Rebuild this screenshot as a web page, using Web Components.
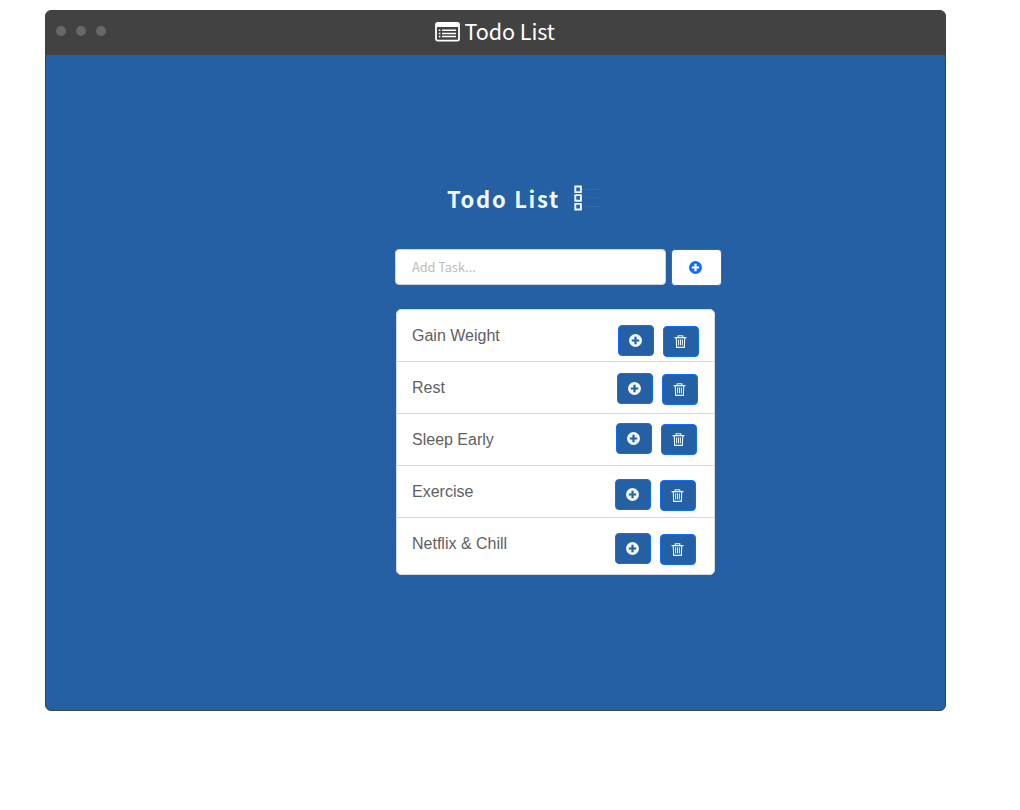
<!DOCTYPE html>
<html lang="en">
<head>
<meta charset="utf-8">
<title>Todo List</title>
<style>
body{margin:0;background:#fff;font-family:"Noto Sans CJK SC","Noto Sans",sans-serif}
</style>
</head>
<body>
<app-window caption="Todo List">
  <list-heading>Todo List</list-heading>
  <task-form></task-form>
  <task-list>
    <task-row style="--top:15px;--right:15px">Gain Weight</task-row>
    <task-row style="--top:11px;--right:16px">Rest</task-row>
    <task-row style="--top:9px;--right:17px">Sleep Early</task-row>
    <task-row style="--top:13px;--right:18px">Exercise</task-row>
    <task-row style="--top:15px;--right:18px;--height:56px;--line:0">Netflix &amp; Chill</task-row>
  </task-list>
</app-window>
<script>
const define = (name, html) => customElements.define(name, class extends HTMLElement {
  constructor() {
    super();
    this.attachShadow({mode: 'open'}).innerHTML = html;
  }
  connectedCallback() {
    const c = this.shadowRoot.querySelector('[data-caption]');
    if (c) c.textContent = this.getAttribute('caption');
  }
});

define('plus-icon', `<style>:host{display:block;width:13px;height:13px}svg{display:block;width:100%;height:100%}</style>
<svg viewBox="0 0 13 13"><path fill="currentColor" fill-rule="evenodd" d="M6.5 0a6.5 6.5 0 1 1 0 13a6.5 6.5 0 1 1 0-13zM5.4 2.8v2.6H2.8v2.2h2.6v2.6h2.2V7.6h2.6V5.4H7.6V2.8z"/></svg>`);

define('trash-icon', `<style>:host{display:block;width:13px;height:13px}svg{display:block}</style>
<svg width="13" height="13" viewBox="0 0 13 13" fill="none" stroke="currentColor" stroke-width="1.1"><path d="M.5 2.6h12M4.2 2.4V.7h4.6v1.7M2.3 2.8l.3 9.6h7.8l.3-9.6"/><path d="M4.6 4.4v6M6.5 4.4v6M8.4 4.4v6" stroke-width="1"/></svg>`);

define('icon-button', `<style>
:host{display:block;width:36px;height:31px}
button{box-sizing:border-box;width:100%;height:100%;margin:0;padding:0 var(--nudge,1px) 0 0;display:flex;align-items:center;justify-content:center;border:1px solid #0d6efd;border-radius:4px;background:var(--fill,#2560a4);color:var(--ink,#f0f8f8)}
</style><button><slot></slot></button>`);

define('app-window', `<style>
:host{display:flex;flex-direction:column;box-sizing:border-box;width:901px;height:701px;margin:10px 0 0 45px;border:1px solid #424242;border-radius:6px;background:#2560a4;overflow:hidden}
header{display:grid;grid-template-columns:1fr auto 1fr;height:44px;flex:none;background:#424242;color:#fff}
.dots{display:flex;gap:10px;padding:15px 0 0 10.4px}
.dots svg{display:block}
.caption{display:flex;gap:4.5px;height:40px;align-items:center;font-size:21.6px;line-height:40px;letter-spacing:-.1px;margin-right:1px}
.caption svg{display:block;margin-top:2px}
main{display:block}
</style>
<header><div class="dots"><svg width="52" height="11" fill="#686868"><circle cx="5" cy="5" r="5"/><circle cx="25" cy="5" r="5"/><circle cx="45" cy="5" r="5"/></svg></div>
<div class="caption"><svg width="25" height="20" viewBox="0 0 25 20"><rect x="1" y="1" width="23" height="17.6" rx="1.6" fill="none" stroke="#fff" stroke-width="1.8"/><path d="M1 1h23v4H1z" fill="#fff"/><path d="M7 8.2h14M7 11.4h14M7 14.6h14M3.8 8.2h1.6M3.8 11.4h1.6M3.8 14.6h1.6" stroke="#fff" stroke-width="1.5"/></svg><span data-caption></span></div><div></div></header>
<main><slot></slot></main>`);

define('list-heading', `<style>
:host{display:flex;align-items:center;gap:13px;height:36px;padding:125px 0 0 401px;color:#f0f8f8}
h1{margin:0;font-size:22px;line-height:36px;font-weight:700;letter-spacing:1.7px}
svg{display:block}
</style><h1><slot></slot></h1>
<svg width="28" height="26" viewBox="0 0 28 26" fill="none"><path d="M2.3 1.5h5.6v5.6H2.3zM2.3 10.1h5.6v5.6H2.3zM2.3 18.9h5.6v5.6H2.3z" stroke="#f0f8f8" stroke-width="1.9"/><path d="M12.5 4.5h14M12.5 21.5h14" stroke="#326da9"/><path d="M12.5 13h14" stroke="#2b66a7"/></svg>`);

define('task-form', `<style>
:host{display:flex;gap:5px;padding:33px 0 0 349px}
input{box-sizing:border-box;width:271px;height:36px;margin:0;padding:0 16px 1px;border:1px solid #ced4da;border-radius:4px;background:#fff;font:12.7px "Noto Sans CJK SC",sans-serif;color:#555}
input::placeholder{color:#bcbcbc;opacity:1}
icon-button{width:51px;height:37px;--fill:#fff;--ink:#0d6efd;--nudge:2px}
</style><input placeholder="Add Task..."><icon-button><plus-icon></plus-icon></icon-button>`);

define('task-list', `<style>
:host{display:block;box-sizing:border-box;width:319px;margin:23px 0 0 350px;border:1px solid #d5dade;border-radius:5px;background:#fff;overflow:hidden}
</style><slot></slot>`);

define('task-row', `<style>
:host{display:flex;box-sizing:border-box;height:var(--height,52px);border-bottom:calc(var(--line,1)*1px) solid #d9d9d9;font:16px "Liberation Sans",Arial,sans-serif;color:#616161}
span{flex:1;padding-left:15px;line-height:52px}
div{display:flex;gap:9px;padding:var(--top) var(--right) 0 0}
icon-button + icon-button{margin-top:1px}
</style><span><slot></slot></span><div><icon-button><plus-icon></plus-icon></icon-button><icon-button><trash-icon></trash-icon></icon-button></div>`);
</script>
</body>
</html>
